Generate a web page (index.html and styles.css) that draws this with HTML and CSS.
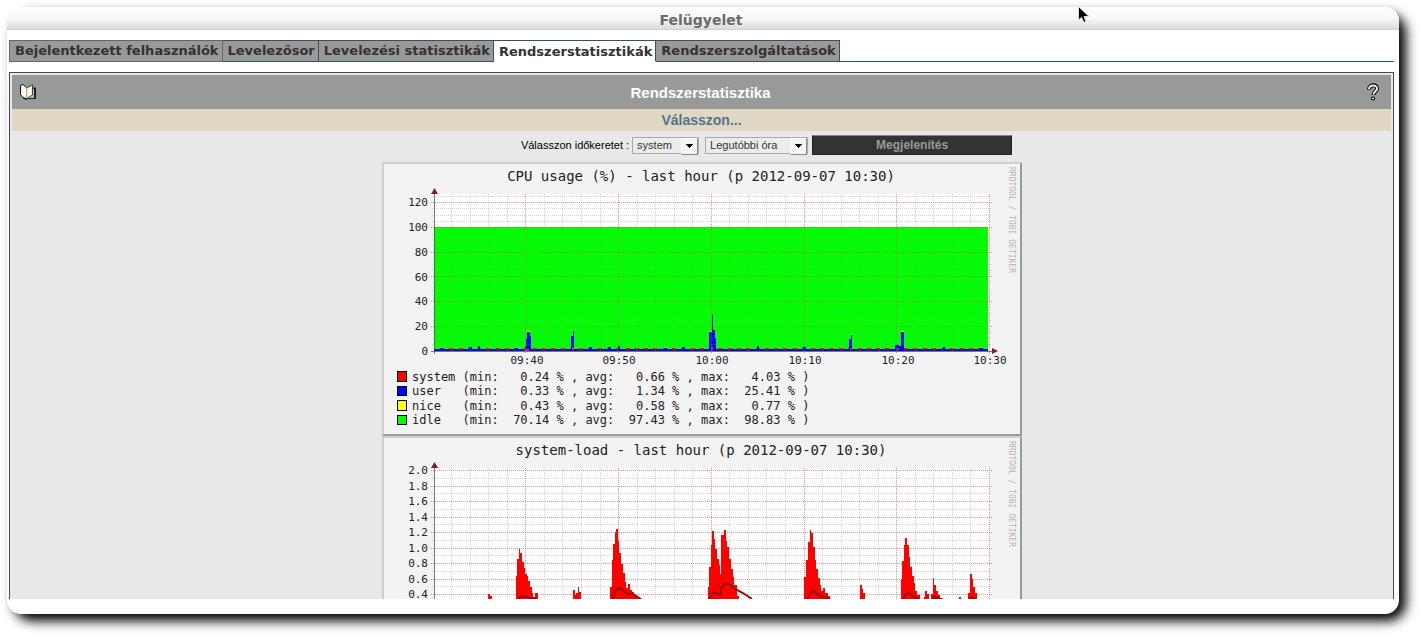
FILE: index.html
```html
<!DOCTYPE html>
<html lang="hu">
<head>
<meta charset="utf-8">
<title>Felügyelet</title>
<link rel="stylesheet" href="styles.css">
</head>
<body>
<div class="window">
  <header class="titlebar">Felügyelet</header>
  <nav class="tabs">
    <a class="tab tab-first" href="#">Bejelentkezett felhasználók</a>
    <a class="tab" href="#">Levelezősor</a>
    <a class="tab" href="#">Levelezési statisztikák</a>
    <a class="tab tab-active" href="#">Rendszerstatisztikák</a>
    <a class="tab" href="#">Rendszerszolgáltatások</a>
    <span class="tabs-rest"></span>
  </nav>
  <main class="panel">
    <div class="panel-head">
      <svg class="icon" viewBox="0 0 16 16" aria-hidden="true">
        <path fill="#0c2a24" d="M11 3.500h5V15H8l-2 1-3-1.500z"/>
        <path fill="#9fcfba" d="M12 5h2v9H8.500z"/>
        <path fill="#fff" stroke="#0d1210" d="M.500 1.500L3 .500l3.500 3V15L3 13.500l-2.500-3z"/>
        <path fill="#f6e6d4" stroke="#4b463c" d="M6.500 3.500l3.500-1 2.500-2V11L10 12.500 6.500 15z"/>
        <path fill="#c9a27c" d="M6 4h1v10H6z"/>
        <path fill="#fff" d="M9 4l2-1v7l-2 1z"/>
      </svg>
      <h1 class="panel-title">Rendszerstatisztika</h1>
      <svg class="icon" viewBox="0 0 16 18" aria-hidden="true">
        <path d="M4 6.500C4 1 12 1 12 5.500c0 3-3.500 3-3.500 6.500" fill="none" stroke="#000" stroke-width="4"/>
        <circle cx="8" cy="15.500" r="2" fill="#000"/>
        <path d="M4 6C4.500 1.500 12 1.500 12 5.500c0 3-3.500 3-3.500 6" fill="none" stroke="#eee" stroke-width="2"/>
        <circle cx="8" cy="15.500" r="1" fill="#eee"/>
      </svg>
    </div>
    <h2 class="panel-sub">Válasszon...</h2>
    <form class="filters">
      <label for="kind">Válasszon időkeretet :</label>
      <span class="select select-kind"><select id="kind"><option>system</option></select></span>
      <span class="select select-range"><select id="range" aria-label="Időkeret"><option>Legutóbbi óra</option></select></span>
      <button class="submit" type="button">Megjelenítés</button>
    </form>
    <div class="charts">
      <svg class="chart" width="640" height="274" viewBox="384 164 636 270">
        <rect class="plot" x="434" y="194" width="556" height="157"/>
        <path fill="#0f0" d="M434 227h554v124H434z"/>
        <g shape-rendering="crispEdges">
          <path stroke="#00f" stroke-width="2" d="M434 350H988"/>
          <path stroke="#a02020" stroke-width="2" stroke-dasharray="4 5.280" d="M440 349H988"/>
          <path stroke="#dfa800" stroke-dasharray="3 6.280" d="M441 347.500H988"/>
          <path fill="#00f" d="M440 348h3v3h-3zM469 347h3v3h-3zM478 346h2v4h-2zM515 348h3v3h-3zM589 347h3v3h-3zM608 347h3v3h-3zM618 346h2v4h-2zM664 348h3v3h-3zM682 347h3v3h-3zM757 346h2v4h-2zM803 347h3v3h-3zM943 347h2v3h-2zM980 348h3v2h-3z"/>
          <path fill="#00f" d="M525 351v-5h1v-7h1v-7h3v4h1v15zM571 351v-15h2v-5h1v20zM709 351v-19h3v-17h1v15h2v8h1v13zM849 351v-12h2v-4h1v16zM895 351v-6h4v1h2v-14h3v19z"/>
          <path fill="#e22" d="M525 349h4v2h-4zM572 347h2v3h-2zM711 347h2v3h-2zM850 348h2v2h-2zM897 348h2v2h-2z"/>
          <path fill="#ff0" d="M527 331h3v1h-3zM573 330h1v1h-1zM709 331h2v1h-2zM851 334h1v1h-1zM901 331h3v1h-3z"/>
        </g>
        <path class="grid minor" d="M432 344.500H992M432 338.500H992M432 332.500H992M432 320.500H992M432 313.500H992M432 307.500H992M432 295.500H992M432 289.500H992M432 282.500H992M432 270.500H992M432 264.500H992M432 258.500H992M432 245.500H992M432 239.500H992M432 233.500H992M432 221.500H992M432 215.500H992M432 208.500H992M432 196.500H992"/>
        <path class="grid minor" d="M451.500 194V352M470.500 194V352M488.500 194V352M507.500 194V352M544.500 194V352M562.500 194V352M581.500 194V352M600.500 194V352M637.500 194V352M655.500 194V352M674.500 194V352M692.500 194V352M729.500 194V352M748.500 194V352M766.500 194V352M785.500 194V352M822.500 194V352M841.500 194V352M859.500 194V352M878.500 194V352M915.500 194V352M933.500 194V352M952.500 194V352M970.500 194V352"/>
        <path class="grid major" d="M431 326.500H993M431 301.500H993M431 276.500H993M431 252.500H993M431 227.500H993M431 202.500H993M525.500 194V354M618.500 194V354M711.500 194V354M804.500 194V354M896.500 194V354M989.500 194V354"/>
        <path class="axis" d="M434.500 354V192M431 351.500H993"/>
        <path class="arrow" d="M431 194l3.500-6 3.500 6zM992 348l6 3-6 3z"/>
        <text class="title" x="701" y="181">CPU usage (%) - last hour (p 2012-09-07 10:30)</text>
        <g class="y">
          <text x="428" y="206">120</text><text x="428" y="231">100</text><text x="428" y="256">80</text><text x="428" y="281">60</text><text x="428" y="305">40</text><text x="428" y="330">20</text><text x="428" y="355">0</text>
        </g>
        <g class="x">
          <text x="527" y="364">09:40</text><text x="619" y="364">09:50</text><text x="712" y="364">10:00</text><text x="805" y="364">10:10</text><text x="898" y="364">10:20</text><text x="990" y="364">10:30</text>
        </g>
        <g stroke="#000">
          <rect x="397.500" y="371.500" width="9" height="10" fill="#f00"/><rect x="397.500" y="386.500" width="9" height="9" fill="#00f"/><rect x="397.500" y="400.500" width="9" height="10" fill="#ff0"/><rect x="397.500" y="415.500" width="9" height="9" fill="#0f0"/>
        </g>
        <g class="legend">
          <text x="412" y="381">system (min:   0.24 % , avg:   0.66 % , max:   4.03 % )</text>
          <text x="412" y="395">user   (min:   0.33 % , avg:   1.34 % , max:  25.41 % )</text>
          <text x="412" y="410">nice   (min:   0.43 % , avg:   0.58 % , max:   0.77 % )</text>
          <text x="412" y="424">idle   (min:  70.14 % , avg:  97.43 % , max:  98.83 % )</text>
        </g>
        <text class="credit" transform="translate(1009 167) rotate(90)">RRDTOOL / TOBI OETIKER</text>
      </svg>
      <svg class="chart" width="640" height="274" viewBox="384 438 636 270">
        <rect class="plot" x="434" y="469" width="556" height="156"/>
        <path class="grid minor" d="M432 478.500H992M432 493.500H992M432 509.500H992M432 524.500H992M432 540.500H992M432 555.500H992M432 571.500H992M432 586.500H992"/>
        <path class="grid minor" d="M451.500 468V625M470.500 468V625M488.500 468V625M507.500 468V625M544.500 468V625M562.500 468V625M581.500 468V625M600.500 468V625M637.500 468V625M655.500 468V625M674.500 468V625M692.500 468V625M729.500 468V625M748.500 468V625M766.500 468V625M785.500 468V625M822.500 468V625M841.500 468V625M859.500 468V625M878.500 468V625M915.500 468V625M933.500 468V625M952.500 468V625M970.500 468V625"/>
        <path class="grid major" d="M431 470.500H993M431 486.500H993M431 501.500H993M431 517.500H993M431 532.500H993M431 548.500H993M431 563.500H993M431 579.500H993M431 594.500H993M525.500 468V625M618.500 468V625M711.500 468V625M804.500 468V625M896.500 468V625M989.500 468V625"/>
        <path fill="#f00" shape-rendering="crispEdges" d="M488 625V594H490V596H492V625z
          M516 625V576H517V559H519V549H520V553H522V562H524V568H525V574H527V576H528V581H530V587H532V593H533V597H535V593H538V625z
          M573 625V590H575V595H576V593H578V587H579V592H581V625z
          M610 625V587H612V560H613V544H615V532H616V529H618V541H619V553H621V564H623V573H625V582H626V588H628V584H630V590H632V592H634V595H637V598H641V625z
          M708 625V587H709V567H711V545H712V531H714V539H715V549H717V559H719V565H720V574H721V535H724V530H726V541H727V547H729V559H731V569H733V577H734V585H737V596H739V625z
          M804 625V577H806V560H808V542H810V530H811V533H813V547H815V560H816V569H818V578H820V585H821V591H823V588H825V593H828V596H830V625z
          M860 625V585H862V589H863V593H865V625z
          M901 625V579H902V561H904V545H905V538H907V545H909V557H910V567H912V576H914V583H915V591H917V595H920V625z
          M924 625V597H925V591H927V594H929V625z
          M931 625V594H933V578H934V585H936V591H938V595H940V625z
          M959 625V597H961V625z
          M968 625V593H970V574H972V579H973V587H975V593H977V625z"/>
        <path fill="none" stroke="#990c0c" stroke-width="2" d="M517 600l5-4 3 1 12 2M611 600l2-2 3-8 3-2 9 6h5l8 5M709 600l4-8 8 3v-7l4-4h4l6 5 8 4 9 6M807 600l5-9 3 1 5 4 5 1 8 4M903 600l3-6 3-1 5 4 7 3M932 600l2-3 4 1 6 2M969 600l2-3 6 3"/>
        <path class="axis" d="M434.500 625V466"/>
        <path class="arrow" d="M431 468l3.500-6 3.500 6z"/>
        <text class="title" x="701" y="455">system-load - last hour (p 2012-09-07 10:30)</text>
        <g class="y">
          <text x="428" y="474">2.0</text><text x="428" y="490">1.8</text><text x="428" y="505">1.6</text><text x="428" y="521">1.4</text><text x="428" y="536">1.2</text><text x="428" y="552">1.0</text><text x="428" y="567">0.8</text><text x="428" y="583">0.6</text><text x="428" y="598">0.4</text>
        </g>
        <text class="credit" transform="translate(1009 441) rotate(90)">RRDTOOL / TOBI OETIKER</text>
      </svg>
    </div>
  </main>
</div>
<svg class="pointer" viewBox="0 0 13 17" aria-hidden="true">
  <path d="M1.500.500V14l3-2.500L7 16.500l2-1L7 10.500h5z" fill="#000" stroke="#ddd"/>
</svg>
</body>
</html>
```
FILE: styles.css
```css
* { box-sizing: border-box; }
body {
  margin: 0;
  height: 100vh;
  padding: 7px 23px 23px 7px;
  background: #fff;
  overflow: hidden;
  font-family: "Liberation Sans", Arial, sans-serif;
}
.window {
  display: flex;
  flex-direction: column;
  height: 100%;
  padding-bottom: 15px;
  overflow: hidden;
  background: #fff;
  border-radius: 14px;
}
body::before {
  content: "";
  position: absolute;
  z-index: -1;
  inset: 7px 23px 23px 7px;
  border-radius: 18px;
  box-shadow: 7px 7px 12px #000;
}
.titlebar {
  flex: none;
  height: 23px;
  border-bottom: 1px solid #d0d0d0;
  background: linear-gradient(#fefefe, #f8f8f6 50%, #dcdcdc);
  color: #6a6a6a;
  font: bold 14px/26px "DejaVu Sans", sans-serif;
  text-align: center;
  padding-right: 4px;
}
.tabs {
  display: flex;
  flex: none;
  height: 22px;
  margin: 10px 5px 10px 2px;
}
.tab {
  flex: none;
  padding: 0 3px 0 5px;
  border: 1px solid #35505f;
  border-left-width: 0;
  background: #999;
  color: #333;
  font: bold 13px/19px "DejaVu Sans", sans-serif;
  text-decoration: none;
}
.tab-first { border-color: #666; border-left-width: 1px; }
.tab-active { background: #fff; border-bottom-color: #fff; line-height: 21px; }
.tabs-rest { flex: 1; border-bottom: 1px solid #35505f; }
.panel {
  flex: 1;
  min-height: 0;
  overflow: hidden;
  margin: 0 5px 0 2px;
  padding: 2px;
  border: 1px solid #35505f;
  border-bottom: 0;
  background: #e8e8e8;
}
.panel-head {
  display: flex;
  align-items: center;
  justify-content: space-between;
  height: 34px;
  padding: 0 10px 0 8px;
  background: #999;
}
.icon { width: 16px; height: 18px; }
.panel-title, .panel-sub { margin: 0; text-align: center; }
.panel-title { font-size: 15px; color: #fff; }
.panel-sub { font-size: 14px; height: 22px; line-height: 22px; background: #e0d8c5; color: #50758b; }
.filters {
  display: flex;
  justify-content: center;
  align-items: center;
  height: 28px;
  padding-left: 130px;
  font-size: 11px;
}
.select { position: relative; height: 17px; border: 1px solid #aaa; background: #ececec; }
.select select {
  appearance: none;
  width: 100%;
  height: 15px;
  padding: 0 4px;
  border: 0;
  background: transparent;
  color: #333;
  font: 11px/15px "Liberation Sans", Arial, sans-serif;
}
.select::after {
  content: "";
  position: absolute;
  right: 0;
  top: 0;
  width: 15px;
  height: 15px;
  pointer-events: none;
  border: 1px solid;
  border-color: #fff #888 #888 #fff;
  background: linear-gradient(#000, #000) center 5px / 7px 1px no-repeat, linear-gradient(#000, #000) center 6px / 5px 1px no-repeat, linear-gradient(#000, #000) center 7px / 3px 1px no-repeat, linear-gradient(#000, #000) center 8px / 1px 1px no-repeat, #f4f4f4;
}
.select-kind { width: 67px; margin: 0 6px 0 3px; }
.select-range { width: 103px; margin-right: 4px; }
.submit {
  width: 200px;
  height: 20px;
  padding: 0;
  border: 1px solid #222;
  border-top-color: #888;
  background: #333;
  color: #999;
  font: bold 12px/18px "Liberation Sans", Arial, sans-serif;
}
.charts { display: flex; flex-direction: column; align-items: center; padding: 3px 0 0 1px; }
.chart {
  flex: none;
  border: 2px solid;
  border-color: #cfcfcf #999 #999 #cfcfcf;
  background: #f3f3f3;
  font-family: "DejaVu Sans Mono", monospace;
}
.chart text { white-space: pre; fill: #222; }
.plot { fill: #fff; }
.grid { fill: none; stroke-dasharray: 1 1; }
.minor { stroke: #8f8f8f; stroke-opacity: 0.35; }
.major { stroke: #de4f4f; stroke-opacity: 0.6; }
.axis { fill: none; stroke: #444; stroke-opacity: 0.7; }
.arrow { fill: #802020; }
.title { font-size: 14px; text-anchor: middle; }
.y { font-size: 11px; text-anchor: end; }
.x { font-size: 11px; text-anchor: middle; }
.legend { font-size: 12px; }
.chart .credit { font-size: 8px; fill: #b5b5b5; }
.pointer { position: absolute; left: 1077px; top: 6px; width: 13px; height: 17px; }
```
